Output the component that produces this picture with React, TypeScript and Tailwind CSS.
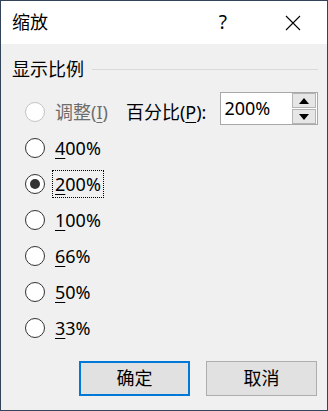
import React from "react";

const font = { fontFamily: '"Noto Sans", "Noto Sans CJK SC", sans-serif' };

function Radio({ checked, disabled }: { checked?: boolean; disabled?: boolean }) {
  return (
    <span
      className={
        "flex h-[20px] w-[20px] shrink-0 items-center justify-center rounded-full border bg-white " +
        (disabled ? "border-[#c4c4c4]" : "border-[#333333]")
      }
    >
      {checked && <span className="h-[10px] w-[10px] rounded-full bg-[#333333]" />}
    </span>
  );
}

function Option({ label, mnemonic, checked }: { label: string; mnemonic: string; checked?: boolean }) {
  return (
    <div className="flex h-[36px] items-center pl-[24px]">
      <Radio checked={checked} />
      <span
        className={
          "ml-[8px] px-[2px] leading-[26px] " +
          (checked ? "outline outline-1 outline-dotted outline-black" : "")
        }
      >
        <span className="underline underline-offset-[3px]">{mnemonic}</span>
        {label}
      </span>
    </div>
  );
}

export default function App() {
  const options = [
    { m: "4", l: "00%" },
    { m: "2", l: "00%", checked: true },
    { m: "1", l: "00%" },
    { m: "6", l: "6%" },
    { m: "5", l: "0%" },
    { m: "3", l: "3%" },
  ];

  return (
    <div
      className="flex h-[411px] w-[328px] flex-col border border-[#33445a] text-[18px] text-black"
      style={font}
    >
      <div className="flex h-[43px] shrink-0 items-center bg-white pl-[11px]">
        <span className="text-[18px]">缩放</span>
        <span className="ml-auto mr-[58px] text-[19px]">?</span>
        <svg width="16" height="16" viewBox="0 0 16 16" className="mr-[26px]">
          <path d="M1 1 L15 15 M15 1 L1 15" stroke="#000" strokeWidth="1.1" />
        </svg>
      </div>

      <div className="flex flex-1 flex-col bg-[#f0f0f0]">
        <div className="mt-[15px] flex h-[20px] items-center pl-[11px] pr-[9px]">
          <span className="leading-none">显示比例</span>
          <span className="ml-[8px] h-px flex-1 bg-[#d9d9d9]" />
        </div>

        <div className="mt-[15px] flex h-[36px] items-center pl-[24px]">
          <Radio disabled />
          <span className="ml-[10px] text-[#6d6d6d]">
            调整(<span className="underline underline-offset-[3px]">I</span>)
          </span>
          <span className="ml-[18px]">
            百分比(<span className="underline underline-offset-[3px]">P</span>):
          </span>
          <div className="mb-[7px] ml-[14px] flex h-[33px] w-[98px] items-center border border-[#a8a8a8] bg-white">
            <span className="pl-[3px]">200%</span>
            <div className="ml-auto mr-[1px] flex h-[31px] w-[24px] flex-col gap-[1px]">
              <span className="flex flex-1 items-center justify-center border border-[#b4b4b4] bg-[#e6e6e6]">
                <svg width="10" height="6" viewBox="0 0 10 6">
                  <path d="M0 6 L5 0 L10 6 Z" fill="#000" />
                </svg>
              </span>
              <span className="flex flex-1 items-center justify-center border border-[#b4b4b4] bg-[#e6e6e6]">
                <svg width="10" height="6" viewBox="0 0 10 6">
                  <path d="M0 0 L5 6 L10 0 Z" fill="#000" />
                </svg>
              </span>
            </div>
          </div>
        </div>

        {options.map((o) => (
          <Option key={o.m + o.l} mnemonic={o.m} label={o.l} checked={o.checked} />
        ))}

        <div className="mt-[15px] flex gap-[16px] pl-[78px]">
          <button className="flex h-[35px] w-[111px] items-center justify-center border-2 border-[#0078d7] bg-[#e1e1e1]">
            确定
          </button>
          <button className="flex h-[35px] w-[111px] items-center justify-center border border-[#adadad] bg-[#e1e1e1]">
            取消
          </button>
        </div>
      </div>
    </div>
  );
}
